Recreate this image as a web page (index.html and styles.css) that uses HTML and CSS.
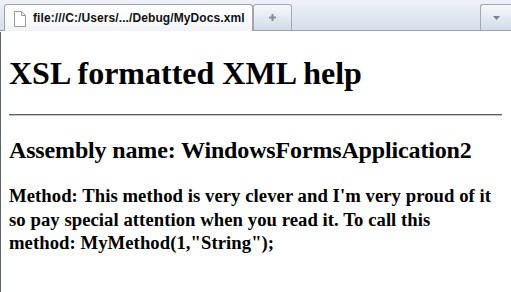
FILE: index.html
```html
<!DOCTYPE html>
<html lang="en">
<head>
    <meta charset="UTF-8">
    <title>XSL formatted XML help</title>
    <link rel="stylesheet" href="styles.css">
</head>
<body>
    <header class="tabstrip">
        <div class="tab active">
            <svg class="page-icon" width="12" height="16" viewBox="0 0 12 16">
                <path d="M0.5 0.5 H7.5 L11.5 4.5 V15.5 H0.5 Z" fill="#fff" stroke="#9a9a9a"/>
                <path d="M7.5 0.5 V4.5 H11.5" fill="none" stroke="#9a9a9a"/>
            </svg>
            <span class="tab-title">file:///C:/Users/.../Debug/MyDocs.xml</span>
        </div>
        <div class="tab newtab">
            <svg width="9" height="9" viewBox="0 0 9 9">
                <path d="M4.5 1 V8 M1 4.5 H8" stroke="#8a8e96" stroke-width="2"/>
            </svg>
        </div>
        <div class="spacer"></div>
        <div class="tab menu">
            <svg width="7" height="4" viewBox="0 0 7 4">
                <path d="M0 0 H7 L3.5 4 Z" fill="#7d838c"/>
            </svg>
        </div>
    </header>
    <main class="page">
        <h1>XSL formatted XML help</h1>
        <hr>
        <h2>Assembly name: WindowsFormsApplication2</h2>
        <h3>Method: This method is very clever and I'm very proud of it so pay special attention when you read it. To call this method: MyMethod(1,"String");</h3>
    </main>
</body>
</html>
```

FILE: styles.css
```css
html, body {
    height: 100%;
}

body {
    margin: 0;
    background-color: #fff;
    font-family: "Liberation Serif", "Times New Roman", serif;
    display: flex;
    flex-direction: column;
    overflow: hidden;
}

.tabstrip {
    display: flex;
    align-items: flex-end;
    height: 31px;
    padding-left: 4px;
    background: linear-gradient(#eef2f8, #d6deeb);
    border-bottom: 1px solid #9ba3ae;
    box-sizing: border-box;
}

.tab {
    display: flex;
    align-items: center;
    justify-content: center;
    box-sizing: border-box;
    height: 26px;
    border: 1px solid #a3a9b2;
    border-bottom: none;
    border-radius: 3px 3px 0 0;
    background: linear-gradient(#f7f9fc, #d2dae7);
}

.tab.active {
    justify-content: flex-start;
    width: 249px;
    height: 27px;
    margin-bottom: -1px;
    padding-left: 9px;
    background: linear-gradient(#ffffff 0%, #f9fafb 60%, #f1f3f6 100%);
    border-color: #a0a4aa;
}

.page-icon {
    margin-right: 7px;
    margin-top: 1px;
}

.tab-title {
    font-family: "Liberation Sans", Arial, sans-serif;
    font-size: 12px;
    font-weight: bold;
    color: #111;
    letter-spacing: 0.1px;
}

.tab.newtab {
    width: 39px;
}

.spacer {
    flex: 1;
}

.tab.menu {
    width: 31px;
    border-right: none;
    border-radius: 3px 0 0 0;
}

.page {
    flex: 1;
    border-left: 1px solid #5c6470;
    padding: 0 9px 0 8px;
    margin-top: 1px;
}

h1 {
    font-size: 32px;
    margin: 23px 0 0;
    line-height: 36px;
}

hr {
    margin: 23px 0 0;
    border: none;
    border-top: 1px solid #5e5e5e;
    border-bottom: 1px solid #c4c4c4;
    height: 0;
}

h2 {
    font-size: 24px;
    margin: 21px 0 0;
    line-height: 27px;
    letter-spacing: -0.15px;
}

h3 {
    font-size: 18.7px;
    margin: 20px 0 0;
    padding-right: 6px;
    line-height: 23.5px;
    letter-spacing: 0.05px;
}
```
